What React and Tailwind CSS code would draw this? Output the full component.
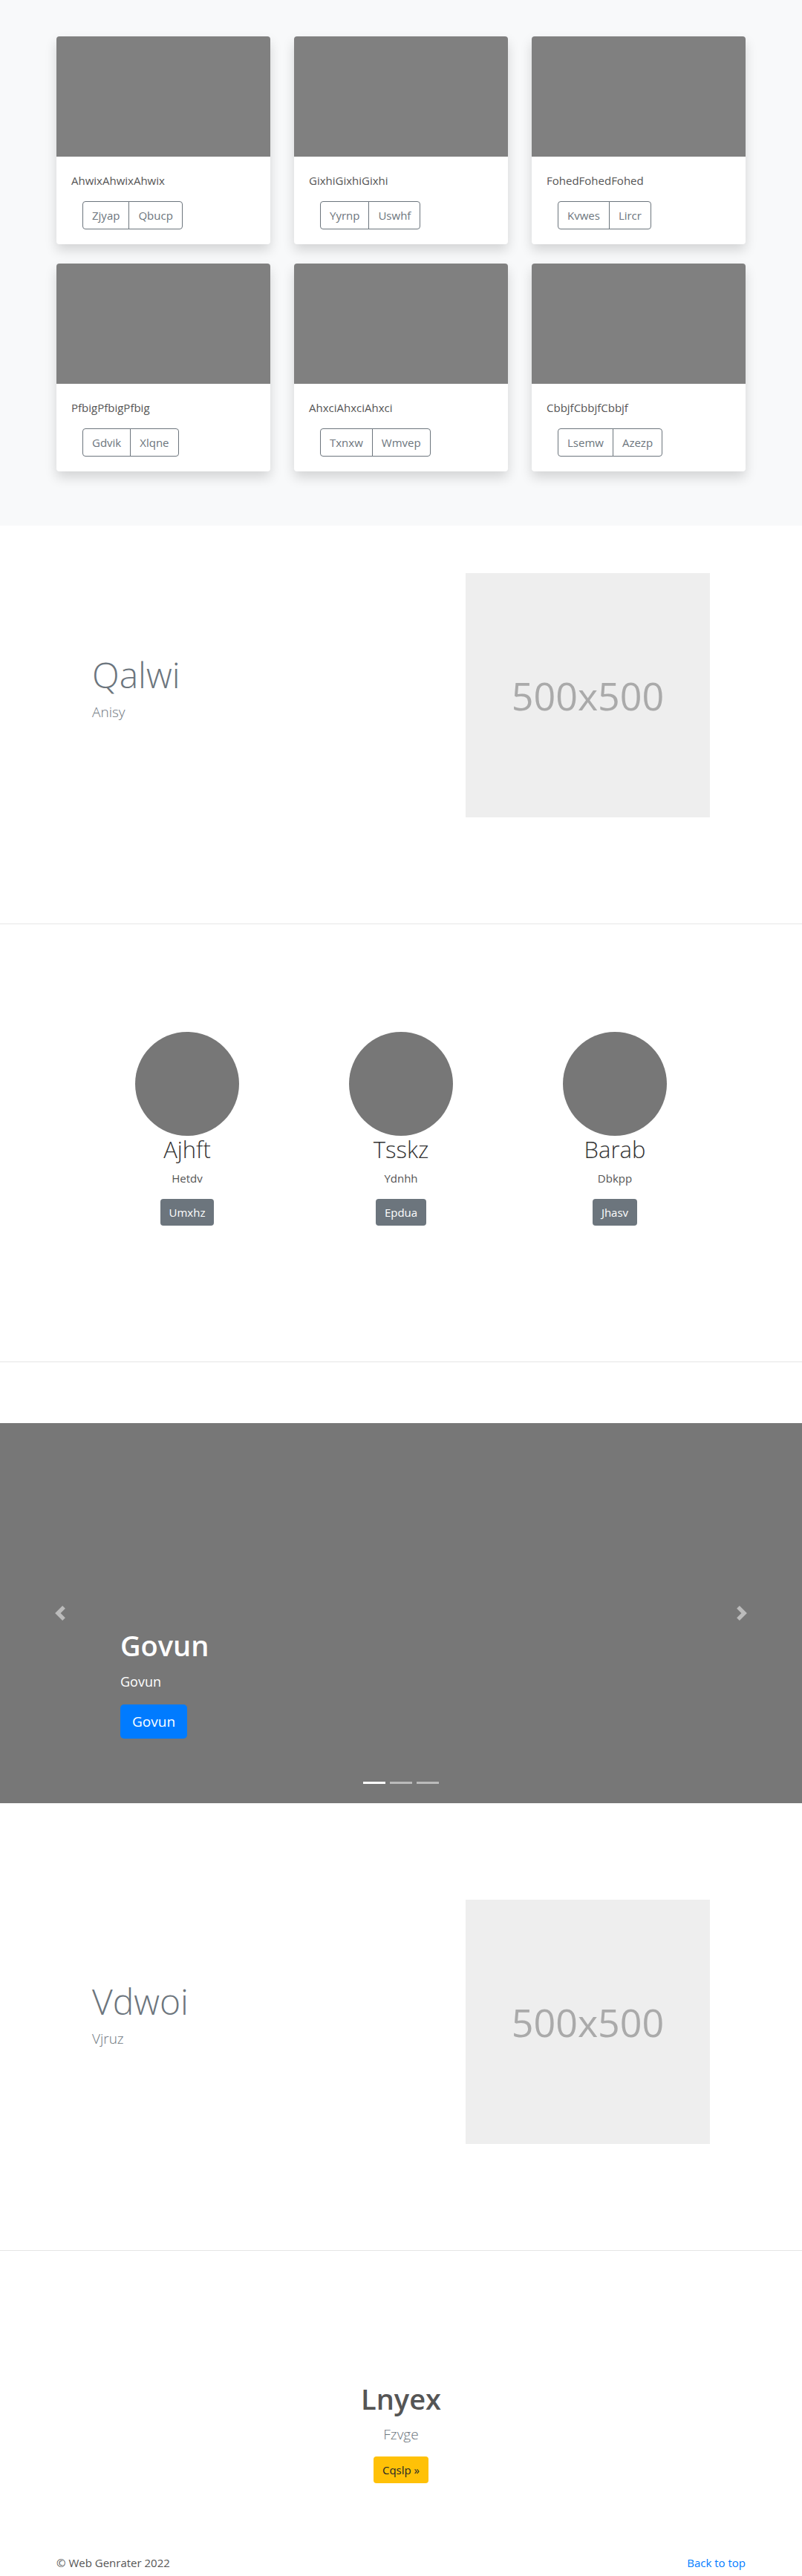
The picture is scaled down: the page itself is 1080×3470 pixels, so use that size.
import React from "react";

const cards = [
  { title: "AhwixAhwixAhwix", btns: ["Zjyap", "Qbucp"] },
  { title: "GixhiGixhiGixhi", btns: ["Yyrnp", "Uswhf"] },
  { title: "FohedFohedFohed", btns: ["Kvwes", "Lircr"] },
  { title: "PfbigPfbigPfbig", btns: ["Gdvik", "Xlqne"] },
  { title: "AhxciAhxciAhxci", btns: ["Txnxw", "Wmvep"] },
  { title: "CbbjfCbbjfCbbjf", btns: ["Lsemw", "Azezp"] },
];

const team = [
  { name: "Ajhft", sub: "Hetdv", btn: "Umxhz" },
  { name: "Tsskz", sub: "Ydnhh", btn: "Epdua" },
  { name: "Barab", sub: "Dbkpp", btn: "Jhasv" },
];

function Card({ title, btns }) {
  return (
    <div className="bg-white rounded-[4px] shadow-[0_8px_16px_rgba(0,0,0,0.15)] overflow-hidden">
      <div className="h-[162px] bg-[#808080]" />
      <div className="p-5">
        <p className="text-[15px] leading-6 text-[#555] mb-4">{title}</p>
        <div className="flex ml-[15px]">
          <button className="px-3 py-1.5 text-[15px] leading-6 text-[#6c757d] border border-[#6c757d] rounded-l-[4px]">
            {btns[0]}
          </button>
          <button className="-ml-px px-3 py-1.5 text-[15px] leading-6 text-[#6c757d] border border-[#6c757d] rounded-r-[4px]">
            {btns[1]}
          </button>
        </div>
      </div>
    </div>
  );
}

function Feature({ title, sub }) {
  return (
    <section className="pt-16 pb-[143px] border-b border-[#e6e6e6]">
      <div className="mx-auto w-[832px] flex items-center justify-between">
        <div className="flex-1">
          <h1 className="text-[48px] leading-[1.2] font-light text-[#6c757d] mb-[7px]">{title}</h1>
          <p className="text-[19px] leading-normal font-light text-[#6c757d] mb-5">{sub}</p>
        </div>
        <div className="w-[329px] h-[329px] bg-[#eeeeee] flex items-center justify-center">
          <span className="text-[52px] text-[#aaaaaa]">500x500</span>
        </div>
      </div>
    </section>
  );
}

function Chevron({ dir }) {
  return (
    <svg width="20" height="20" viewBox="0 0 8 8" fill="#fff">
      {dir === "prev" ? (
        <path d="M5.25 0l-4 4 4 4 1.5-1.5L4.25 4l2.5-2.5L5.25 0z" />
      ) : (
        <path d="M2.75 0l-1.5 1.5L3.75 4l-2.5 2.5L2.75 8l4-4-4-4z" />
      )}
    </svg>
  );
}

export default function App() {
  return (
    <div className="bg-white font-['Open_Sans',sans-serif] text-[#212529]">
      {/* album */}
      <section className="bg-[#f8f9fa] pt-[49px] pb-[73px]">
        <div className="mx-auto w-[928px] grid grid-cols-3 gap-x-8 gap-y-[26px]">
          {cards.map((c) => (
            <Card key={c.title} {...c} />
          ))}
        </div>
      </section>

      <Feature title="Qalwi" sub="Anisy" />

      {/* team */}
      <section className="pt-[145px] pb-[167px] border-b border-[#e6e6e6]">
        <div className="mx-auto w-[864px] grid grid-cols-3 text-center">
          {team.map((t) => (
            <div key={t.name} className="flex flex-col items-center">
              <div className="w-[140px] h-[140px] rounded-full bg-[#777777]" />
              <h2 className="text-[31px] leading-[1.2] font-light text-[#333] mb-2">{t.name}</h2>
              <p className="text-[15px] leading-6 text-[#555] mb-4">{t.sub}</p>
              <button className="px-3 py-1.5 text-[15px] leading-6 text-white bg-[#6c757d] rounded-[4px] mb-4">
                {t.btn}
              </button>
            </div>
          ))}
        </div>
      </section>

      {/* carousel */}
      <div className="relative mt-[82px] mb-[66px] h-[512px] bg-[#777777] flex flex-col justify-end px-[15%] pb-[51px]">
        <div className="py-5 text-white">
          <h1 className="text-[38px] leading-[1.2] font-semibold mb-[11px]">Govun</h1>
          <p className="text-[18px] leading-[30px] mb-4">Govun</p>
          <p className="mb-4">
            <button className="px-4 py-2 text-[19px] leading-[30px] text-white bg-[#007bff] rounded-[5px]">
              Govun
            </button>
          </p>
        </div>
        <div className="absolute inset-y-0 left-0 w-[15%] flex items-center justify-center opacity-50">
          <Chevron dir="prev" />
        </div>
        <div className="absolute inset-y-0 right-0 w-[15%] flex items-center justify-center opacity-50">
          <Chevron dir="next" />
        </div>
        <div className="absolute bottom-0 left-0 right-0 mb-4 flex justify-center">
          <span className="w-[30px] h-[3px] mx-[3px] my-[10px] bg-white" />
          <span className="w-[30px] h-[3px] mx-[3px] my-[10px] bg-white opacity-50" />
          <span className="w-[30px] h-[3px] mx-[3px] my-[10px] bg-white opacity-50" />
        </div>
      </div>

      <Feature title="Vdwoi" sub="Vjruz" />

      {/* call to action */}
      <section className="pt-[177px] pb-[95px] text-center">
        <h1 className="text-[38px] leading-[1.2] font-semibold text-[#555] mb-[10px]">Lnyex</h1>
        <p className="text-[19px] leading-normal font-light text-[#6c757d] mb-4">Fzvge</p>
        <button className="px-3 py-1.5 text-[15px] leading-6 text-[#212529] bg-[#ffc107] rounded-[4px]">
          Cqslp »
        </button>
      </section>

      <footer className="mx-auto w-[928px] flex justify-between pb-12 text-[15px] leading-6">
        <p className="text-[#555]">© Web Genrater 2022</p>
        <a href="#" className="text-[#007bff]">
          Back to top
        </a>
      </footer>
    </div>
  );
}
